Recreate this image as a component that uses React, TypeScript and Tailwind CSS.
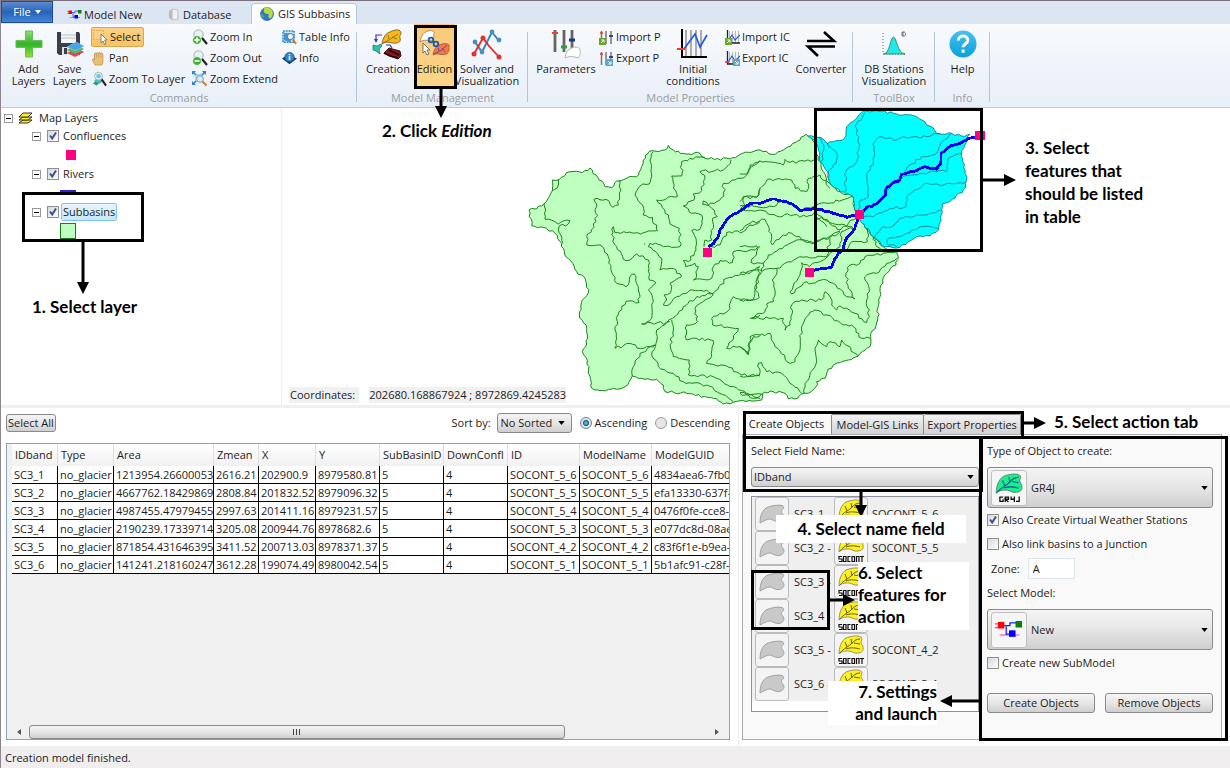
import React from "react";

type Pt = [number, number];

const parse = (s: string): Pt[] =>
  s.trim().split(/\s+/).map((p) => p.split(",").map(Number) as Pt);

// Subdivides a polyline and nudges the new vertices so that it reads as a digitised contour.
function rough(s: string, amp = 5, closed = false): string {
  const pts = parse(s);
  const out: string[] = [];
  const n = closed ? pts.length : pts.length - 1;
  for (let i = 0; i < n; i++) {
    const [ax, ay] = pts[i];
    const [bx, by] = pts[(i + 1) % pts.length];
    const len = Math.hypot(bx - ax, by - ay) || 1;
    const steps = Math.max(1, Math.round(len / 9));
    out.push(`${ax},${ay}`);
    for (let k = 1; k < steps; k++) {
      const t = k / steps;
      const x = ax + (bx - ax) * t;
      const y = ay + (by - ay) * t;
      const h = Math.sin(x * 12.9898 + y * 78.233) * 43758.5453;
      const r = (h - Math.floor(h) - 0.5) * amp;
      out.push(`${(x - ((by - ay) / len) * r).toFixed(1)},${(y + ((bx - ax) / len) * r).toFixed(1)}`);
    }
  }
  if (!closed) out.push(pts[pts.length - 1].join(","));
  return "M" + out.join("L") + (closed ? "Z" : "");
}

const basin =
  "27,330 50,327 72,312 97,272 97,240 118,238 150,215 187,218 210,204 228,225 255,260 275,263 290,243 320,235 350,230 362,210 370,180 388,154 405,153 435,150 445,136 460,150 490,160 540,160 555,175 630,177 660,163 720,150 757,163 790,150 825,128 858,103 875,112 895,170 910,215 928,250 960,275 1000,290 1005,330 1020,360 1060,410 1090,440 1130,455 1135,470 1128,495 1100,520 1088,540 1076,600 1073,660 1052,710 1050,740 1015,768 985,780 945,792 922,815 915,835 890,845 888,860 865,880 845,882 825,897 805,897 795,880 750,873 728,880 725,900 640,907 610,912 580,895 500,880 435,875 430,855 410,838 375,838 337,828 315,860 290,868 240,872 225,870 212,858 207,800 187,755 203,715 200,685 178,645 187,600 205,578 195,535 170,515 158,490 137,470 125,430 105,400 80,385 35,377";

const westLines = [
  "72,312 75,358 105,365 115,372 130,363 150,362 145,372 118,378 115,390 128,430",
  "97,272 115,255 115,238",
  "300,240 303,270 295,315 278,322 258,298 222,298 230,320 228,365 200,410 200,435 240,435 265,470 290,550 318,560 330,530 343,522 355,560 357,608 318,604 297,635 285,690 285,745 330,730 360,745 390,740 405,735",
  "400,155 390,180 395,230 388,252 360,258 345,285 368,315 370,345 398,353 412,392 370,398 320,398 285,398 280,380 275,405 290,440 318,482 350,462 385,480 388,540 408,548 385,570 400,605 395,655 365,672 440,668 458,655 490,620 530,590 580,580 620,535 690,520 720,500",
  "555,172 510,175 485,185 485,228 455,228 472,290 410,300 445,345 450,372 478,385 480,440 430,440 390,430 385,440 425,475 420,510 460,505 485,530 450,550 452,578 432,585 440,600 430,615 450,612 470,590 510,570 560,570 575,580",
  "633,180 610,210 540,215 555,235 545,272 520,282 522,300 490,318 515,340 545,345 540,388 515,392 528,415 528,450 505,485 490,482 497,500 525,490 535,500 530,525 520,540 575,535 580,500 600,482 637,488 640,455 680,455 720,440",
  "720,183 695,200 680,225 645,240 610,250 612,288 590,305 565,315 550,303 548,313 575,325 592,350 578,355 575,420 555,420 552,440",
  "660,330 675,315 670,292 710,292 720,265",
  "720,365 690,375 670,395 620,398 600,435 575,440",
  "580,580 555,600 525,625 532,665 500,675 500,720 530,715 580,722 575,770 560,790 620,798 665,825 720,828",
  "720,590 690,600 640,590 630,610 625,632 575,655 578,675 655,685 620,745 660,740 685,765 690,710 720,705",
  "455,660 460,690 450,735 460,770 508,780 505,825 580,830 640,860 720,895",
  "450,665 410,690 408,730 395,765 415,800 460,820 490,845 560,855 640,905",
  "405,735 360,760 340,800 337,828",
  "718,500 705,560 715,590",
  "372,430 376,434",
  "690,655 720,645",
];

const eastLines = [
  "0,222 20,222 30,195 60,183 130,195 135,178 150,187 222,180",
  "0,305 10,290 50,292 60,265 80,240 155,240 165,265 200,275 205,235 240,225 270,265",
  "0,318 60,322 100,320 130,300 180,330 220,320 340,290",
  "0,330 60,330 110,348 160,345 200,350 230,340 300,390 325,370 350,355",
  "0,392 30,370 75,358 88,385 97,435 130,405 155,400 215,432 225,425 300,393",
  "0,440 50,437 50,455 33,487 70,490 85,465 150,430 170,420 220,430 270,412 300,395",
  "0,520 50,510 110,505 170,475 200,470 260,470 270,415",
  "70,490 55,530 45,580 40,598 0,600",
  "110,505 105,530 97,540 105,570 100,605 80,612 75,635 35,655 130,655 135,690 150,675 155,615 185,600 245,600 255,575 270,590 275,615 290,630 300,618 320,625 345,640 380,668 388,630 380,600 388,575 375,540 380,525 410,520 440,490 470,475",
  "185,488 180,525 150,575 155,582 190,550 260,540 280,550 320,590 345,597 325,565 318,520 330,495 360,490 375,470 430,460 470,455",
  "0,740 25,762 28,740 40,710 90,700 105,740 150,790 165,785 180,750 185,690 200,650 225,630 260,645 310,675 335,675 365,715 390,715",
  "192,880 195,850 230,785 225,745 235,720 260,740 270,725 300,740 305,720 355,768",
  "0,828 58,825 55,790 65,788 80,815 125,820 150,850 185,880",
  "0,878 25,885 65,882 40,895 0,880",
  "380,365 382,425 335,425 320,450 290,455",
  "260,380 225,352 340,385 305,395 300,440",
  "185,488 208,500 250,480 300,440",
  "400,410 410,440 430,455",
];

const cyan =
  "205,108 240,112 262,130 300,122 318,108 320,80 345,60 370,33 425,33 470,42 530,50 570,78 590,100 635,100 665,108 690,103 682,110 665,160 675,210 680,240 678,262 645,295 607,312 603,345 595,390 570,408 530,410 505,425 480,442 450,440 430,440 400,410 360,360 345,330 340,290 310,276 288,265 268,245 262,215 240,185 235,150 222,120";

const cyanLines = [
  "375,38 345,78 360,135 350,185 318,215 315,275",
  "262,130 290,160 288,190 265,215 268,240",
  "240,112 252,135 245,185",
  "600,100 560,110 490,110 470,120 420,110 403,125 400,185 380,232 385,290 362,300 355,330",
  "635,100 600,135 590,160 545,170 500,205 470,240",
  "665,160 625,175 620,215 590,215 540,220 490,230 440,270",
  "678,245 610,255 560,250 540,265 500,290 498,320 450,325 400,350 370,352",
  "603,330 560,345 520,350 480,355 460,378 430,380 405,410",
  "595,385 540,380 500,400 480,410 445,415 440,430 470,440",
];

const rivers = [
  "565,440 580,432 592,415 600,390 620,360 640,343 665,330 690,310 720,310 757,297 800,305 825,318 840,332 885,325 940,340 982,352 1020,343",
  "868,516 900,507 935,502 945,475 970,445 980,415 1005,385 1018,345",
  "1020,343 1040,322 1070,312 1098,285 1100,262 1140,238 1145,222 1180,215 1215,200 1250,208 1262,190 1263,160 1285,142 1320,130 1345,115 1380,106",
];

function BasinMap() {
  return (
    <svg className="block h-full w-full" viewBox="282 108 948 297" preserveAspectRatio="xMinYMin meet" role="img" aria-label="Subbasins map">
      <g transform="translate(520 100) scale(0.33333)" fill="none" strokeWidth="3" strokeLinejoin="round" shapeRendering="crispEdges">
        <path d={rough(basin, 8, true)} fill="#bfffbf" stroke="#178217" />
        {westLines.map((l) => <path key={l} d={rough(l, 9)} stroke="#178217" />)}
        <g transform="translate(660 0)">
          {eastLines.map((l) => <path key={l} d={rough(l, 9)} stroke="#178217" />)}
          <path d={rough(cyan, 7, true)} fill="#00ffff" stroke="#0a8f9a" />
          {cyanLines.map((l) => <path key={l} d={rough(l, 8)} stroke="#0a8f9a" />)}
        </g>
        {rivers.map((l) => <path key={l} d={rough(l, 4)} stroke="#0a00f5" strokeWidth="8.500" />)}
        <g fill="#ff007f">
          <rect x="549" y="444" width="28" height="28" />
          <rect x="854" y="503" width="28" height="28" />
          <rect x="1005" y="330" width="28" height="28" />
          <rect x="1366" y="92" width="28" height="28" />
        </g>
      </g>
    </svg>
  );
}

/* ---------- icons ---------- */

const PlusIcon = () => (
  <svg width="28" height="28" viewBox="0 0 28 28">
    <defs><linearGradient id="pl" x1="0" y1="0" x2="0" y2="1"><stop offset="0" stopColor="#8edf6e" /><stop offset=".5" stopColor="#2fb52c" /><stop offset="1" stopColor="#8fe32e" /></linearGradient></defs>
    <path d="M10.500 1h7v9.500H27v7h-9.500V27h-7v-9.500H1v-7h9.500z" fill="url(#pl)" stroke="#6cbb5c" />
  </svg>
);

const SaveIcon = () => (
  <svg width="28" height="28" viewBox="0 0 28 28">
    <path d="M1 2h22l1 2v21H3l-2-2z" fill="#3c3f49" />
    <rect x="5" y="2" width="15" height="11" fill="#f4f6f8" />
    <path d="M5 5h15M5 8h15" stroke="#b9c0c8" />
    <rect x="6" y="17" width="11" height="8" fill="#dfe3e8" /><rect x="8" y="18" width="3" height="6" fill="#3c3f49" />
    <path d="M11 23l8 4 9-5-8-4z" fill="#e0435b" /><path d="M11 20l8 4 9-5-8-4z" fill="#58b947" /><path d="M11 17l9 4 8-5-8-4z" fill="#46a5e8" stroke="#8fd0f7" strokeWidth=".6" />
  </svg>
);

const SelectIcon = () => (
  <svg width="16" height="16" viewBox="0 0 16 16">
    <rect x="1.500" y="1.500" width="10" height="9" fill="#ffcf86" stroke="#e7a44b" strokeDasharray="1.500 1" />
    <path d="M9 5v9l2-2 1.500 3.500 1.500-.7L12.700 11H15z" fill="#fff" stroke="#5b6a86" strokeWidth=".8" />
  </svg>
);

const PanIcon = () => (
  <svg width="15" height="16" viewBox="0 0 15 16">
    <path d="M3 15c-1-2-2.500-4-2.500-5.500 0-1 1-1 2 0V4c0-1.300 1.700-1.300 1.900 0 0-1.800 2-1.800 2.200-.3.200-1.600 2.200-1.500 2.300.2.300-1.300 2-1 2 .6V12l-1 3z" fill="#eac078" stroke="#c79243" strokeWidth=".8" />
    <path d="M4.500 4v4M6.700 4v4M8.900 4v4" stroke="#c9984e" strokeWidth=".6" />
  </svg>
);

const Lens = ({ x, y, r }: { x: number; y: number; r: number }) => (
  <>
    <path d={`M${x + r * 0.7} ${y + r * 0.7}L15 15`} stroke="#222" strokeWidth="2.200" />
    <circle cx={x} cy={y} r={r} fill="#e9f1f4" stroke="#9fb0bb" strokeWidth="1" />
  </>
);

const ZoomIcon = ({ plus }: { plus: boolean }) => (
  <svg width="16" height="16" viewBox="0 0 16 16">
    <Lens x={6.500} y={5.500} r={4.700} />
    <circle cx="5" cy="11" r="4.300" fill="#3eb12f" stroke="#fff" strokeWidth=".5" />
    <path d={plus ? "M5 8.500v5M2.500 11h5" : "M2.500 11h5"} stroke="#fff" strokeWidth="1.800" />
  </svg>
);

const ZoomLayerIcon = () => (
  <svg width="15" height="16" viewBox="0 0 16 16">
    <path d="M1 13l3-3 4 2-3 3z" fill="#2f9c5c" /><path d="M2 10l4-3 6 3-4 3z" fill="#43b6c9" />
    <Lens x={7} y={5} r={4.200} /><circle cx="7" cy="5" r="2.500" fill="#7ac6d8" />
  </svg>
);

const ZoomExtendIcon = () => (
  <svg width="16" height="16" viewBox="0 0 16 16">
    <rect x="3" y="3" width="8" height="8" fill="#a9d5f4" />
    <path d="M1 1l3 3M13 1l-3 3M1 13l3-3" stroke="#2d83c9" strokeWidth="1.600" /><path d="M0 0h4L0 4zM14 0h-4l4 4zM0 14h4l-4-4z" fill="#2d83c9" />
    <circle cx="8" cy="8" r="3.300" fill="#d9edf9" stroke="#7f9cb3" /><path d="M10.500 10.500l4 4" stroke="#c8822a" strokeWidth="2" />
  </svg>
);

const TableInfoIcon = () => (
  <svg width="15" height="15" viewBox="0 0 16 16">
    <rect x="1" y="1" width="12" height="12" fill="#cfe6f8" stroke="#2c7fbd" strokeWidth="1.500" strokeDasharray="2 1" />
    <path d="M2 3l9 1-2 9-7-2z" fill="#3f95d2" /><circle cx="9" cy="7" r="3.300" fill="#eaf5fb" stroke="#356f9e" /><path d="M11.500 10l3.500 5" stroke="#c8822a" strokeWidth="2" />
  </svg>
);

const InfoIcon = () => (
  <svg width="15" height="15" viewBox="0 0 16 16">
    <path d="M0 8l6-4 10 4-8 6z" fill="#1d3d5e" /><circle cx="8" cy="6.500" r="5" fill="#2f86d1" stroke="#154a80" strokeWidth=".7" />
    <path d="M8 5.500v4M8 3.200v1.400" stroke="#fff" strokeWidth="1.700" />
  </svg>
);

const CreationIcon = () => (
  <svg width="32" height="32" viewBox="0 0 32 32">
    <path d="M10 16C11 9 14 5 18 4c5-3 11-3 11 1 0 2-2 3-1 5s0 5-4 5c-5 1-9-3-14 1z" fill="#f5b91d" stroke="#6d5210" strokeWidth=".8" />
    <path d="M11 15c5-2 9-5 15-9M17 11l-1-4M20 9l5 2" stroke="#7a5c10" strokeWidth=".7" fill="none" />
    <path d="M10 7H4v6M14 17l4 0 2 3" fill="none" stroke="#3434c8" strokeWidth="1.200" /><path d="M2 11h4l-2 4z" fill="#3434c8" />
    <path d="M1 17l4 1 4-2 1 2-3 3 1 5-4-3-3-1z" fill="#2bc5a6" stroke="#156b5a" strokeWidth=".7" />
    <path d="M12 25l5-5 11 3 1 5-3 3-8-3z" fill="#8e1420" stroke="#2a0a0c" strokeWidth=".9" /><path d="M12 25l6 3 8 2M17 22l10 5" stroke="#1c0708" strokeWidth="1.700" fill="none" />
  </svg>
);

const EditionIcon = () => (
  <svg width="32" height="32" viewBox="0 0 32 32">
    <path d="M1 14c1-6 4-10 8-11 4-1 7 0 6 3-1 2 1 5-2 6-4 1-8-1-12 2z" fill="#fff" stroke="#8b7b66" strokeWidth=".8" />
    <path d="M14 27c1-6 4-10 9-11 5-1 8 0 7 3 0 2 1 5-3 7-5 2-8-2-13 1z" fill="#f3764d" stroke="#9d4a36" strokeWidth=".8" />
    <path d="M15 26c5-2 9-5 13-9M20 23l-1-3M23 20l3 4" stroke="#5b3a86" strokeWidth=".8" fill="none" />
    <circle cx="12" cy="12" r="2.300" fill="none" stroke="#1c5aa8" strokeWidth="1.800" /><circle cx="17" cy="16" r="2.300" fill="none" stroke="#1c5aa8" strokeWidth="1.800" />
    <path d="M4 15v10l2-2 2 4 2-1-2-4h3z" fill="#fff" stroke="#555" strokeWidth=".8" />
  </svg>
);

const SolverIcon = () => (
  <svg width="32" height="32" viewBox="0 0 32 32">
    <path d="M4 14l7 10L21 4l7 9" fill="none" stroke="#3d85b8" strokeWidth="2" />
    <path d="M3 26L12 10l6 8 10 11" fill="none" stroke="#dd2c2c" strokeWidth="1.800" />
    <g fill="#4a8fc2"><circle cx="4" cy="14" r="2.400" /><circle cx="11" cy="24" r="2.400" /><circle cx="21" cy="4" r="2.400" /><circle cx="28" cy="12" r="2.400" /></g>
    <g fill="#e03131"><circle cx="3" cy="26" r="2.500" /><circle cx="12" cy="10" r="2.500" /><circle cx="28" cy="29" r="2.500" /></g>
  </svg>
);

const ParametersIcon = () => (
  <svg width="32" height="32" viewBox="0 0 32 32">
    <path d="M5 2v22M14 2v22M22 2v20" stroke="#666" strokeWidth="2.800" />
    <path d="M15 30c1-5 2-8 5-9 4-3 9-2 10 0 0 3 1 6-2 9-5-2-9-2-13 0z" fill="#fff" stroke="#aaa" strokeWidth=".9" />
    <path d="M2 6l3-4 3 4z" fill="#f0402f" /><path d="M2 5h6" stroke="#f0402f" strokeWidth="2" /><path d="M11 19h6" stroke="#2f9e35" strokeWidth="3" /><path d="M19 12h6" stroke="#17338f" strokeWidth="3" />
  </svg>
);

const SmallParamIcon = ({ out }: { out: boolean }) => (
  <svg width="15" height="15" viewBox="0 0 15 15">
    <path d="M2.500 1v13M7 1v13M12 1v13" stroke="#777" strokeWidth="1.500" /><path d="M1 3h3" stroke="#ef4b3b" strokeWidth="1.800" /><path d="M10 6h4" stroke="#1d3b96" strokeWidth="1.800" />
    <rect x={out ? 7 : 0} y="8" width="7" height="7" fill={out ? "#5aa7cc" : "#66a82c"} />
    <path d={out ? "M9 10l3 3M12 10.500V13H9.500" : "M2 13l3-3M2.500 10H5v2.500"} stroke="#fff" fill="none" />
  </svg>
);

const ConditionsIcon = () => (
  <svg width="32" height="32" viewBox="0 0 32 32">
    <path d="M9 2v26M14 2v26M19 2v26M24 2v26" stroke="#a8a8a8" strokeWidth="1.900" /><path d="M5 1v28h25" fill="none" stroke="#000" strokeWidth="2" />
    <path d="M7 21L18 6l5 13 7-12" fill="none" stroke="#2457e6" strokeWidth="1.700" /><path d="M0 21h8" stroke="#f03a2d" strokeWidth="2" />
  </svg>
);

const SmallConditionsIcon = ({ out }: { out: boolean }) => (
  <svg width="15" height="15" viewBox="0 0 15 15">
    <path d="M4.500 1v12M7.500 1v12M10.500 1v12M13.500 1v12" stroke="#b5b5b5" /><path d="M2.500 0v13H15" fill="none" stroke="#222" strokeWidth="1.300" />
    <path d="M3 11l4-6 3 5 5-5" fill="none" stroke="#2457e6" strokeWidth="1.200" />
    {out && <path d="M0 11h4" stroke="#f03a2d" strokeWidth="1.600" />}
    <rect x={out ? 8 : 0} y="8" width="7" height="7" fill={out ? "#5aa7cc" : "#66a82c"} />
    <path d={out ? "M10 10l3 3M13 10.500V13h-2.500" : "M2 13l3-3M2.500 10H5v2.500"} stroke="#fff" fill="none" />
  </svg>
);

const ConverterIcon = () => (
  <svg width="32" height="32" viewBox="0 0 32 32">
    <path d="M2 13h27L19 4" fill="none" stroke="#000" strokeWidth="2.600" /><path d="M30 18.500H3L13 28" fill="none" stroke="#000" strokeWidth="2.600" />
  </svg>
);

const StationsIcon = () => (
  <svg width="32" height="32" viewBox="0 0 32 32">
    <path d="M5 5v21h23" fill="none" stroke="#888" strokeWidth="1.300" strokeDasharray="1 2" />
    <path d="M6 26c6-1 6-16 9.500-17C19 10 19 25 27 26z" fill="#1fe9ee" stroke="#2d8b52" strokeWidth=".9" />
    <path d="M24 4h2c2 0 2 4 0 4h-2zm1 0v4" fill="none" stroke="#555" strokeWidth=".8" />
  </svg>
);

const HelpIcon = () => (
  <svg width="28" height="28" viewBox="0 0 28 28">
    <defs><linearGradient id="hp" x1="0" y1="0" x2="0" y2="1"><stop offset="0" stopColor="#46c2ee" /><stop offset="1" stopColor="#0b9fdc" /></linearGradient></defs>
    <circle cx="14" cy="14" r="13.500" fill="url(#hp)" />
    <path d="M9.300 10.500c.2-6 9.700-5.800 9.500 0-.1 3.200-4.700 3.400-4.700 6.700M14.100 19.500v3.200" fill="none" stroke="#fff" strokeWidth="3" />
  </svg>
);

const ModelIcon = ({ size }: { size: number }) => (
  <svg width={size} height={(size * 18) / 30} viewBox="0 0 30 18">
    <path d="M0 3h4M0 7h4M5 15h12M21 15h5" stroke="#ff2fd0" strokeWidth="1.300" />
    <path d="M9 5h7v-3h7M12 6v8h4" fill="none" stroke="#2020ff" strokeWidth="1.400" />
    <rect x="3" y="1" width="7" height="7" fill="#f00" /><rect x="22" y="0" width="7" height="7" fill="#0a7d0a" /><rect x="15" y="10" width="7" height="7" fill="#00f" />
  </svg>
);

const DatabaseIcon = () => (
  <svg width="11" height="13" viewBox="0 0 11 13">
    <path d="M1 3l3-2v11l-3-2z" fill="#bbb" /><path d="M4 1l6 1v9l-6 1z" fill="#e3e3e3" stroke="#bdbdbd" strokeWidth=".8" /><path d="M6 2v9M8 2v9" stroke="#fff" />
  </svg>
);

const GlobeIcon = () => (
  <svg width="14" height="14" viewBox="0 0 14 14">
    <circle cx="7" cy="7" r="6.500" fill="#2f79c4" stroke="#1a4f8e" strokeWidth=".6" />
    <path d="M4 1c3-1 5 0 7 1 3 3 2 7 0 9-3 1-3-2-2-4-2 0-4 0-5-2s1-2 0-4z" fill="#b9dc3a" /><path d="M1 7c2 0 3 2 3 4-2-1-3-2-3-4z" fill="#6fb23a" />
  </svg>
);

const LayersIcon = () => (
  <svg width="15" height="13" viewBox="0 0 15 13">
    <g fill="#ffee22" stroke="#222" strokeWidth=".9"><path d="M1 11l4-3h9l-4 3z" /><path d="M1 8l4-3h9l-4 3z" /><path d="M1 5l4-4h9l-4 4z" /></g>
  </svg>
);

const GreyBasin = () => (
  <svg width="26" height="22" viewBox="0 0 26 22">
    <path d="M1 20C1 13 3 7 8 4.500c5-2 11-3 15-2 2.500 1 2 3 0 4.500-1.500 2 .5 3.500 1.500 5 1.500 3.500-1 6-4.500 6.500-3 .5-6-1.500-8.500-2.500-4 0-6.500 2-10.500 4z" fill="#c9c9c9" stroke="#9b9b9b" strokeWidth=".9" />
  </svg>
);

const LeafPaths = ({ fill, vein }: { fill: string; vein: string }) => (
  <>
    <path d="M1 19C1 13 3 6 8 3c5-2 12-3 15-1 2 2 0 4 0 5 0 2 2 3 2 5 1 4-2 6-5 6-4 1-6-2-9-2-4 0-7 0-10 3z" fill={fill} stroke="#555" strokeWidth=".6" />
    <path d="M2 18C6 13 10 12 13 9s5-5 9-5M9 12L7 7M14 9l-1-5M8 14c5-2 10-1 14 0M16 8l6 1" fill="none" stroke={vein} strokeWidth="1" />
  </>
);

const SocontIcon = () => (
  <svg width="26" height="30" viewBox="0 0 26 30">
    <LeafPaths fill="#fff21a" vein="#5c5c2a" />
    <g fill="none" stroke="#111" strokeWidth="1.200"><path d="M4 23.500H1V26h3v2.500H1M5.500 23.500h2.500v5H5.500zM12.500 23.500H10v5h2.500M14 23.500h2.500v5H14zM18.500 29v-5.500H21V29M22 23.500h4M24 23.500V29" /></g>
  </svg>
);

const Gr4jIcon = () => (
  <svg width="28" height="30" viewBox="0 0 26 28">
    <LeafPaths fill="#16f08a" vein="#1a44a8" />
    <g fill="none" stroke="#111" strokeWidth="1.200"><path d="M7.500 22.500H4.500v4h3v-2M9.500 27v-4.500h3v2h-3l3 2.500M15 22v2.500h3V22v5M22.500 22v4.500h-3" /></g>
  </svg>
);

const Caret = () => (
  <svg className="pointer-events-none shrink-0" width="7" height="4" viewBox="0 0 8 5"><path d="M0 0h8L4 5z" fill="#000" /></svg>
);

/* ---------- call-outs ---------- */

const Frame = ({ className }: { className: string }) => (
  <div className={"pointer-events-none absolute border-[3px] border-black " + className} />
);

const Note = ({ className, children }: { className: string; children: React.ReactNode }) => (
  <p className={"absolute font-['Lato',sans-serif] text-[17px] font-bold whitespace-nowrap text-black " + className}>{children}</p>
);

function Arrow({ dir, length, className }: { dir: "down" | "right" | "left"; length: number; className: string }) {
  const down = dir === "down";
  const w = down ? 12 : length;
  const h = down ? length : 12;
  const d = down
    ? `M4.500 0h3v${length - 12}h4.500l-6 12l-6-12h4.500z`
    : dir === "right"
      ? `M0 4.500v3h${length - 12}v4.500l12-6l-12-6v4.500z`
      : `M${length} 4.500v3h${12 - length}v4.500l-12-6l12-6v4.500z`;
  return <svg className={"pointer-events-none absolute " + className} width={w} height={h} viewBox={`0 0 ${w} ${h}`}><path d={d} fill="#000" /></svg>;
}

/* ---------- ribbon ---------- */

const Group = ({ label, className, children }: { label: string; className: string; children: React.ReactNode }) => (
  <section className={"relative flex shrink-0 flex-col justify-between after:absolute after:top-2 after:right-0 after:h-[70px] after:w-px after:bg-[#b4c6d8] " + className}>
    <div className="flex">{children}</div>
    <h2 className="pb-0.5 text-center text-[11px] leading-[14px] text-[#9a9da1]">{label}</h2>
  </section>
);

const BigButton = ({ icon, className, children }: { icon: React.ReactNode; className: string; children: React.ReactNode }) => (
  <button className={"flex shrink-0 flex-col items-center pt-1 text-center text-[11px] leading-3 " + className}>
    <span className="flex h-8 items-center">{icon}</span>
    <span className="pt-[3px] whitespace-nowrap">{children}</span>
  </button>
);

const SmallButton = ({ icon, active, children }: { icon: React.ReactNode; active?: boolean; children: React.ReactNode }) => (
  <button className={"flex h-5 items-center gap-0.5 rounded-xs border text-[11px] leading-4 whitespace-nowrap " + (active ? "border-[#d9a84e] bg-linear-to-b from-[#fbd18a] to-[#fdc35c] pr-[3px]" : "border-transparent")}>
    {icon}
    {children}
  </button>
);

function Ribbon() {
  return (
    <header className="relative z-10">
      <nav className="flex h-6 items-end border-t border-[#786e7a] bg-[#dce6f3] text-[11px]">
        <button className="flex h-[22px] w-[52px] items-center justify-center gap-1 self-start border border-[#1d4b9e] bg-linear-to-b from-[#5b8bd0] via-[#2a62b8] to-[#3f86d8] text-white">
          File <svg width="6" height="4" viewBox="0 0 6 4"><path d="M0 0h6L3 4z" fill="#fff" /></svg>
        </button>
        <button className="flex h-[19px] w-[101px] items-center gap-0.5 pl-3.5 whitespace-nowrap"><ModelIcon size={15} />Model New</button>
        <button className="flex h-[19px] w-[97px] items-center gap-1 pl-3.5 whitespace-nowrap"><DatabaseIcon />Database</button>
        <button className="flex h-[21px] w-[106px] items-center gap-1 rounded-t-sm border border-b-0 border-[#b4c9e0] bg-linear-to-b from-white to-[#f6f9fd] pl-2 whitespace-nowrap"><GlobeIcon />GIS Subbasins</button>
      </nav>
      <div className="flex h-[84px] border-b border-[#b9cde2] bg-linear-to-b from-[#f8fafd] to-[#e8eff8]">
        <Group label="Commands" className="w-[356px]">
          <BigButton icon={<PlusIcon />} className="ml-[7px] w-[41px]">Add<br />Layers</BigButton>
          <BigButton icon={<SaveIcon />} className="mr-px w-[41px]">Save<br />Layers</BigButton>
          <div className="flex w-[100px] flex-col items-start gap-px pt-[3px]">
            <SmallButton icon={<SelectIcon />} active>Select</SmallButton>
            <SmallButton icon={<PanIcon />}>Pan</SmallButton>
            <SmallButton icon={<ZoomLayerIcon />}>Zoom To Layer</SmallButton>
          </div>
          <div className="flex w-[90px] flex-col items-start gap-px pt-[3px]">
            <SmallButton icon={<ZoomIcon plus />}>Zoom In</SmallButton>
            <SmallButton icon={<ZoomIcon plus={false} />}>Zoom Out</SmallButton>
            <SmallButton icon={<ZoomExtendIcon />}>Zoom Extend</SmallButton>
          </div>
          <div className="flex flex-col items-start gap-px pt-[3px]">
            <SmallButton icon={<TableInfoIcon />}>Table Info</SmallButton>
            <SmallButton icon={<InfoIcon />}>Info</SmallButton>
          </div>
        </Group>
        <Group label="Model Management" className="w-[171px]">
          <BigButton icon={<CreationIcon />} className="ml-[5px] w-[52px]">Creation</BigButton>
          <div className="relative w-[41px]">
            <BigButton icon={<EditionIcon />} className="h-[65px] w-[41px] bg-linear-to-b from-[#fbc877] to-[#fdd78c]">Edition</BigButton>
            <Frame className="top-px left-0 h-[64px] w-[43px]" />
            <Arrow dir="down" length={30} className="top-[64px] left-[21px]" />
            <Note className="top-[95px] -left-[32px] leading-6">2. Click <em>Edition</em></Note>
          </div>
          <BigButton icon={<SolverIcon />} className="w-16">Solver and<br />Visualization</BigButton>
        </Group>
        <Group label="Model Properties" className="w-[325px]">
          <BigButton icon={<ParametersIcon />} className="ml-1.5 w-16">Parameters</BigButton>
          <div className="flex w-16 flex-col items-start gap-px pt-[3px]">
            <SmallButton icon={<SmallParamIcon out={false} />}>Import P</SmallButton>
            <SmallButton icon={<SmallParamIcon out />}>Export P</SmallButton>
          </div>
          <BigButton icon={<ConditionsIcon />} className="w-[62px]">Initial<br />conditions</BigButton>
          <div className="flex w-[70px] flex-col items-start gap-px pt-[3px]">
            <SmallButton icon={<SmallConditionsIcon out={false} />}>Import IC</SmallButton>
            <SmallButton icon={<SmallConditionsIcon out />}>Export IC</SmallButton>
          </div>
          <BigButton icon={<ConverterIcon />} className="w-[54px]">Converter</BigButton>
        </Group>
        <Group label="ToolBox" className="w-[82px]">
          <BigButton icon={<StationsIcon />} className="w-full">DB Stations<br />Visualization</BigButton>
        </Group>
        <Group label="Info" className="w-[55px]">
          <BigButton icon={<HelpIcon />} className="w-full">Help</BigButton>
        </Group>
      </div>
    </header>
  );
}

/* ---------- layer tree ---------- */

const Check = ({ id, checked }: { id: string; checked?: boolean }) => (
  <span className="grid size-3 shrink-0">
    <input id={id} type="checkbox" defaultChecked={checked} className="peer col-start-1 row-start-1 size-3 appearance-none border border-[#8e8f8f] bg-linear-to-br from-[#d5d8dc] to-white" />
    <svg className="pointer-events-none invisible col-start-1 row-start-1 size-3 peer-checked:visible" viewBox="0 0 12 12"><path d="M3 5.500l2.200 3L9 2.500" fill="none" stroke="#3b4f93" strokeWidth="2" /></svg>
  </span>
);

const Toggle = () => (
  <button aria-label="Collapse" className="flex size-[9px] shrink-0 items-center justify-center border border-[#9a9a9a] bg-white">
    <span className="h-px w-[5px] bg-black" />
  </button>
);

function LayerNode({ id, name, selected, swatch }: { id: string; name: string; selected?: boolean; swatch: React.ReactNode }) {
  return (
    <li>
      <div className="flex h-[18px] items-center">
        <Toggle />
        <span className="ml-1.5 flex pb-px"><Check id={id} checked /></span>
        <label htmlFor={id} className={"ml-0.5 rounded-xs border px-px leading-4 " + (selected ? "border-[#7cc4ee] bg-linear-to-b from-[#e6f5fd] to-[#c6e7fa]" : "border-transparent")}>{name}</label>
      </div>
      <div className="flex h-5 items-center pl-7">{swatch}</div>
    </li>
  );
}

const LayerTree = () => (
  <aside className="relative w-[281px] shrink-0 border-r border-[#ececec] bg-white pt-px pl-[3px]">
    <div className="flex h-[18px] items-center"><Toggle /><span className="mr-1.5 ml-[5px]"><LayersIcon /></span>Map Layers</div>
    <ul className="pl-7">
      <LayerNode id="ly1" name="Confluences" swatch={<span className="ml-1.5 size-2.5 bg-[#ff007f]" />} />
      <LayerNode id="ly2" name="Rivers" swatch={<span className="mb-1 h-0.5 w-4 bg-[#2a22dd]" />} />
      <LayerNode id="ly3" name="Subbasins" selected swatch={<span className="size-4 border border-[#178217] bg-[#bfffbf]" />} />
    </ul>
    <Frame className="top-[84px] left-[21px] h-[50px] w-[122px]" />
    <Arrow dir="down" length={53} className="top-[133px] left-[76px]" />
    <Note className="top-[187px] left-[31px] leading-6">1. Select layer</Note>
  </aside>
);

/* ---------- attribute table ---------- */

const columns: [string, string][] = [
  ["IDband", "w-[46px]"], ["Type", "w-[56px]"], ["Area", "w-[100px]"], ["Zmean", "w-[45px]"], ["X", "w-[57px]"], ["Y", "w-[64px]"],
  ["SubBasinID", "w-[64px]"], ["DownConfl", "w-[64px]"], ["ID", "w-[72px]"], ["ModelName", "w-[72px]"], ["ModelGUID", "w-[90px]"],
];

const rows = [
  ["SC3_1", "no_glacier", "1213954.26600053", "2616.21", "202900.9", "8979580.81", "5", "4", "SOCONT_5_6", "SOCONT_5_6", "4834aea6-7fb0"],
  ["SC3_2", "no_glacier", "4667762.18429869", "2808.84", "201832.52", "8979096.32", "5", "4", "SOCONT_5_5", "SOCONT_5_5", "efa13330-637f-"],
  ["SC3_3", "no_glacier", "4987455.47979455", "2997.63", "201411.16", "8979231.57", "5", "4", "SOCONT_5_4", "SOCONT_5_4", "0476f0fe-cce8-"],
  ["SC3_4", "no_glacier", "2190239.17339714", "3205.08", "200944.76", "8978682.6", "5", "4", "SOCONT_5_3", "SOCONT_5_3", "e077dc8d-08ae"],
  ["SC3_5", "no_glacier", "871854.431646395", "3411.52", "200713.03", "8978371.37", "5", "4", "SOCONT_4_2", "SOCONT_4_2", "c83f6f1e-b9ea-"],
  ["SC3_6", "no_glacier", "141241.218160247", "3612.28", "199074.49", "8980042.54", "5", "4", "SOCONT_5_1", "SOCONT_5_1", "5b1afc91-c28f-"],
];

const buttonFace = "rounded-[3px] border border-[#8a8a8a] bg-linear-to-b from-[#f4f4f4] via-[#e6e6e6] to-[#cfcfcf] ";

const Radio = ({ label, checked }: { label: string; checked?: boolean }) => (
  <label className="flex items-center gap-[3px] whitespace-nowrap">
    <input type="radio" name="order" defaultChecked={checked} className="size-3 appearance-none rounded-full border border-[#9a9a9a] bg-[#e6e6e6] checked:border-[#6f8391] checked:bg-[radial-gradient(circle,#7fd4f5_0,#17608c_38%,#dfe6ea_48%)]" />
    {label}
  </label>
);

function AttributePanel() {
  return (
    <section className="flex min-w-0 flex-1 flex-col bg-white pt-[5px] pr-2 pb-1.5 pl-[5px]">
      <div className="flex h-5 items-center">
        <button className={buttonFace + "h-[18px] px-px leading-4 whitespace-nowrap"}>Select All</button>
        <label htmlFor="sort" className="mr-1.5 ml-auto">Sort by:</label>
        <span className={buttonFace + "flex h-5 w-[75px] items-center pr-1.5"}>
          <select id="sort" className="w-full appearance-none bg-transparent pl-[3px] leading-4"><option>No Sorted</option></select>
          <Caret />
        </span>
        <span className="ml-2 flex gap-2"><Radio label="Ascending" checked /><Radio label="Descending" /></span>
      </div>
      <div className="mt-2.5 flex flex-1 flex-col justify-between overflow-hidden border border-[#8aa3bd] bg-[#f0f0f0]">
        <div className="overflow-hidden pl-[5px]">
          <table className="w-[730px] table-fixed border-separate border-spacing-0">
            <thead>
              <tr className="h-[22px] bg-linear-to-b from-white to-[#f1f1f2]">
                {columns.map(([name, w]) => <th key={name} scope="col" className={"overflow-hidden border-r border-[#dcdfe3] p-0 pl-[3px] text-left font-normal whitespace-nowrap " + w}>{name}</th>)}
              </tr>
            </thead>
            <tbody>
              {rows.map((r) => (
                <tr key={r[0]} className="h-[18px] bg-white">
                  {r.map((c, i) => <td key={i} className="overflow-hidden border-r border-b border-black p-0 pl-0.5 leading-4 whitespace-nowrap">{c}</td>)}
                </tr>
              ))}
            </tbody>
          </table>
        </div>
        <div className="flex h-[15px] items-center gap-2 px-2.5">
          <svg className="shrink-0" width="4" height="6" viewBox="0 0 4 6"><path d="M4 0v6L0 3z" fill="#555" /></svg>
          <div className="flex-1">
            <div className={buttonFace + "flex h-3.5 w-[79%] items-center justify-center gap-0.5"}>
              <i className="h-1.5 w-px bg-[#444]" /><i className="h-1.5 w-px bg-[#444]" /><i className="h-1.5 w-px bg-[#444]" />
            </div>
          </div>
          <svg className="shrink-0" width="4" height="6" viewBox="0 0 4 6"><path d="M0 0v6l4-3z" fill="#555" /></svg>
        </div>
      </div>
    </section>
  );
}

/* ---------- objects panel ---------- */

const links = [["SC3_1 -", "SOCONT_5_6"], ["SC3_2 -", "SOCONT_5_5"], ["SC3_3 -", "SOCONT_5_4"], ["SC3_4 -", "SOCONT_5_3"], ["SC3_5 -", "SOCONT_4_2"], ["SC3_6 -", "SOCONT_5_1"]];

const tile = "flex size-[34px] shrink-0 items-center justify-center rounded-[3px] border border-[#b9bcbf] bg-[#f4f4f4] ";

const IconSelect = ({ id, value, icon }: { id: string; value: string; icon: React.ReactNode }) => (
  <span className={buttonFace + "flex h-[41px] items-center pr-1 pl-[3px]"}>
    <span className="flex size-9 shrink-0 items-center justify-center rounded-[3px] border border-[#c0c0c0] bg-[#f6f6f6]">{icon}</span>
    <select id={id} className="h-full min-w-0 flex-1 appearance-none bg-transparent pl-1"><option>{value}</option></select>
    <Caret />
  </span>
);

const CheckRow = ({ id, label, checked }: { id: string; label: string; checked?: boolean }) => (
  <div className="flex h-4 items-center gap-[3px]"><Check id={id} checked={checked} /><label htmlFor={id}>{label}</label></div>
);

function ObjectsPanel() {
  const tab = "h-5 rounded-t-xs border border-b-0 border-[#8a8a8a] bg-linear-to-b from-[#f2f2f2] to-[#d2d2d2] leading-4 whitespace-nowrap ";
  return (
    <section className="relative flex w-[492px] shrink-0 flex-col border-l border-[#ececec] bg-white pt-1.5 pr-2 pb-1.5 pl-[3px]">
      <div role="tablist" className="flex h-5 items-end">
        <button role="tab" aria-selected="true" className="h-5 w-[89px] bg-[#f9f9f9] leading-4 whitespace-nowrap">Create Objects</button>
        <button role="tab" className={tab + "w-[93px]"}>Model-GIS Links</button>
        <button role="tab" className={tab + "w-[97px] border-l-0"}>Export Properties</button>
      </div>
      <div className="flex flex-1 border border-[#a9adb3] bg-[#f9f9f9] pt-2 pr-2 pl-2">
        <div className="flex w-[228px] flex-col">
          <label htmlFor="field" className="leading-4">Select Field Name:</label>
          <span className={buttonFace + "mt-2 flex h-5 items-center pr-1"}>
            <select id="field" className="min-w-0 flex-1 appearance-none bg-transparent pl-0.5 leading-4"><option>IDband</option></select>
            <Caret />
          </span>
          <div className="mt-[9px] border border-[#8c9298] bg-white pb-2.5">
            <ul className="bg-[#efefef]">
              {links.map(([a, b]) => (
                <li key={a} className="flex h-[34px] items-center pl-[3px]">
                  <button aria-label={"Basin " + a} className={tile}><GreyBasin /></button>
                  <span className="w-[45px] pl-[5px] whitespace-nowrap">{a}</span>
                  <button aria-label={b} className={tile}><SocontIcon /></button>
                  <span className="pl-1">{b}</span>
                </li>
              ))}
            </ul>
          </div>
        </div>
        <form className="ml-2 flex flex-1 flex-col" onSubmit={(e) => e.preventDefault()}>
          <label htmlFor="otype" className="mb-2 leading-4">Type of Object to create:</label>
          <IconSelect id="otype" value="GR4J" icon={<Gr4jIcon />} />
          <div className="mt-1 flex flex-col gap-2">
            <CheckRow id="c1" label="Also Create Virtual Weather Stations" checked />
            <CheckRow id="c2" label="Also link basins to a Junction" />
          </div>
          <div className="mt-1.5 flex h-[21px] items-center gap-2 pl-1">
            <label htmlFor="zone">Zone:</label>
            <input id="zone" defaultValue="A" className="h-[21px] w-[47px] border border-[#dfe5ec] bg-white pl-1" />
          </div>
          <label htmlFor="model" className="mt-1.5 mb-2 leading-4">Select Model:</label>
          <IconSelect id="model" value="New" icon={<ModelIcon size={28} />} />
          <div className="mt-[5px]"><CheckRow id="c3" label="Create new SubModel" /></div>
          <div className="mt-[22px] flex gap-2.5">
            <button className={buttonFace + "h-5 flex-1 leading-4"}>Create Objects</button>
            <button className={buttonFace + "h-5 flex-1 leading-4"}>Remove Objects</button>
          </div>
        </form>
      </div>

      <Frame className="top-[3px] left-[4px] h-[28px] w-[281px]" />
      <Frame className="top-[28px] left-[4px] h-[56px] w-[240px]" />
      <Frame className="top-[28px] right-[2px] h-[305px] w-[249px]" />
      <Arrow dir="right" length={23} className="top-[9px] left-[284px]" />
      <Note className="top-[2px] left-[315px] leading-6">5. Select action tab</Note>
      <Arrow dir="down" length={26} className="top-[83px] left-[116px]" />
      <Note className="top-[107px] left-[37px] w-[190px] bg-white py-0.5 text-center leading-6">4. Select name field</Note>
      <Note className="top-[154px] left-[119px] w-[111px] bg-white pb-0.5 leading-[22px]">6. Select<br />features for<br />action</Note>
      <Frame className="top-[162px] left-[12px] h-[60px] w-[79px]" />
      <Arrow dir="right" length={26} className="top-[186px] left-[90px]" />
      <Note className="top-[273px] left-[89px] w-[109px] bg-white text-right leading-[22px]">7. Settings<br />and launch</Note>
      <Arrow dir="left" length={42} className="top-[287px] left-[201px]" />
    </section>
  );
}

export default function App() {
  return (
    <div className="flex min-h-screen flex-col border-l border-[#8d858f] bg-white font-['Open_Sans','Noto_Sans',sans-serif] text-[11px] leading-4 text-[#1c1c1c]">
      <Ribbon />
      <main className="flex flex-1 flex-col">
        <div className="flex h-[297px]">
          <LayerTree />
          <div className="relative min-w-0 flex-1 bg-white">
            <BasinMap />
            <div className="absolute bottom-0.5 left-[7px] flex gap-2.5">
              <span className="bg-[#f0f0f0] px-px pr-1">Coordinates:</span>
              <span className="bg-[#f0f0f0]">202680.168867924 ; 8972869.4245283</span>
            </div>
            <Frame className="top-0 left-[532px] h-[144px] w-[169px]" />
            <Arrow dir="right" length={34} className="top-[66px] left-[700px]" />
            <Note className="top-[28px] left-[743px] leading-[23px]">3. Select<br />features that<br />should be listed<br />in table</Note>
          </div>
        </div>
        <div className="h-[3px] bg-[#f0f0f0]" />
        <div className="flex flex-1">
          <AttributePanel />
          <ObjectsPanel />
        </div>
      </main>
      <footer className="h-[22px] bg-[#f0eeee] pl-1 leading-6">Creation model finished.</footer>
    </div>
  );
}
